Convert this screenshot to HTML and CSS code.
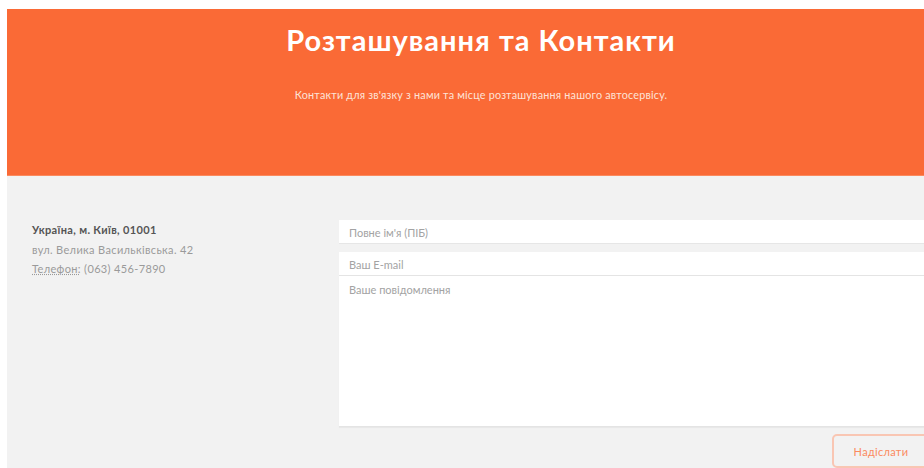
FILE: index.html
```html
<!DOCTYPE html>
<html lang="uk">
<head>
<meta charset="utf-8">
<title>Розташування та Контакти</title>
<link rel="stylesheet" href="styles.css">
</head>
<body>
<div class="page">
  <header class="hero">
    <h1 class="hero-title">Розташування та Контакти</h1>
    <p class="hero-sub">Контакти для зв'язку з нами та місце розташування нашого автосервісу.</p>
  </header>
  <section class="contact">
    <div class="address">
      <p class="addr-city">Україна, м. Київ, 01001</p>
      <p class="addr-line">вул. Велика Васильківська. 42</p>
      <p class="addr-line"><abbr class="addr-abbr" title="Телефон">Телефон:</abbr> (063) 456-7890</p>
    </div>
    <form class="form">
      <input class="field field-name" type="text" placeholder="Повне ім'я (ПІБ)">
      <input class="field field-mail" type="email" placeholder="Ваш E-mail">
      <textarea class="field field-msg" placeholder="Ваше повідомлення"></textarea>
      <div class="form-actions">
        <button class="send" type="button">Надіслати</button>
      </div>
    </form>
  </section>
</div>
</body>
</html>
```

FILE: styles.css
```css
html, body {
  overflow: hidden;
}

body {
  margin: 9px 0 0 7px;
  font-family: Lato, "Open Sans", sans-serif;
  background: #ffffff;
}

.page {
  width: 948px;
}

.hero {
  background: #fa6a36;
  height: 167px;
  border-bottom: 1px solid #fb8a5e;
  box-sizing: border-box;
  display: flex;
  flex-direction: column;
  align-items: center;
  padding-top: 14px;
}

.hero-title {
  margin: 0;
  color: #ffffff;
  font-size: 29px;
  font-weight: 700;
  line-height: 34px;
  letter-spacing: 1px;
}

.hero-sub {
  margin: 31px 0 0;
  color: #fde3d8;
  font-size: 10.8px;
  line-height: 14px;
  letter-spacing: 0.2px;
}

.contact {
  background: #f2f2f2;
  display: flex;
  padding: 44px 11px 0 25px;
  height: 300px;
}

.address {
  width: 307px;
  flex: none;
}

.address p {
  margin: 0;
  font-size: 11px;
  line-height: 19.5px;
  letter-spacing: 0.35px;
}

.addr-city {
  color: #555555;
  font-weight: 700;
}

.addr-line {
  color: #9a9a9a;
}

.addr-abbr {
  text-decoration: underline dotted #9a9a9a;
  cursor: help;
}

.form {
  flex: 1;
  display: flex;
  flex-direction: column;
}

.field {
  display: block;
  border: none;
  background: #ffffff;
  font-family: inherit;
  font-size: 11px;
  color: #555555;
  padding: 0 10px;
  outline: none;
  box-sizing: border-box;
  width: 100%;
}

.field::placeholder {
  color: #a3a3a3;
}

.field-name {
  height: 24px;
  padding-top: 2px;
  border-bottom: 1px solid #e6e6e6;
}

.field-mail {
  height: 24px;
  margin-top: 8px;
  padding-top: 2px;
  border-bottom: 1px solid #e4e4e4;
}

.field-msg {
  height: 151px;
  resize: none;
  padding-top: 7px;
  line-height: 14px;
  border-bottom: 1px solid #e4e4e4;
  box-shadow: 0 1px 1px rgba(0, 0, 0, 0.04);
}

.form-actions {
  display: flex;
  justify-content: flex-end;
  margin-top: 7px;
  padding-right: 14px;
}

.send {
  width: 98px;
  height: 34px;
  background: transparent;
  border: 2px solid #f9c6b3;
  border-radius: 5px;
  color: #fb8a5e;
  font-family: inherit;
  font-size: 11px;
  letter-spacing: 0.3px;
}
```
